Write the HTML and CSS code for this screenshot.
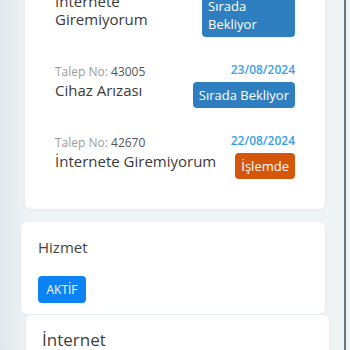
FILE: index.html
```html
<!DOCTYPE html>
<html>
<head>
    <meta charset="utf-8">
    <title>Taleplerim</title>
    <link rel="stylesheet" href="styles.css">
</head>
<body>
    <div class="screen">
        <div class="card ticket-list">
            <div class="ticket">
                <div class="ticket-info">
                    <div class="ticket-no">Talep No: <span>43012</span></div>
                    <div class="ticket-title">Internete<br>Giremiyorum</div>
                </div>
                <div class="ticket-side">
                    <div class="ticket-date">24/08/2024</div>
                    <span class="badge badge-wait badge-wide">Sırada Bekliyor</span>
                </div>
            </div>
            <div class="ticket">
                <div class="ticket-info">
                    <div class="ticket-no">Talep No: <span>43005</span></div>
                    <div class="ticket-title">Cihaz Arızası</div>
                </div>
                <div class="ticket-side">
                    <div class="ticket-date">23/08/2024</div>
                    <span class="badge badge-wait">Sırada Bekliyor</span>
                </div>
            </div>
            <div class="ticket">
                <div class="ticket-info">
                    <div class="ticket-no">Talep No: <span>42670</span></div>
                    <div class="ticket-title">İnternete Giremiyorum</div>
                </div>
                <div class="ticket-side">
                    <div class="ticket-date">22/08/2024</div>
                    <span class="badge badge-progress">İşlemde</span>
                </div>
            </div>
        </div>

        <div class="card service-card">
            <h2>Hizmet</h2>
            <button class="status-btn">AKTİF</button>
        </div>

        <div class="card product-card">
            <h3>İnternet</h3>
        </div>
    </div>
</body>
</html>
```

FILE: styles.css
```css
html, body {
    margin: 0;
    padding: 0;
    height: 350px;
    overflow: hidden;
    background-color: #eef3f6;
}
body {
    font-family: "Open Sans", "Noto Sans", Arial, sans-serif;
    color: #3d3d3d;
}
.screen {
    width: 344px;
    height: 350px;
    overflow: hidden;
    border-right: 2px solid #68747c;
    background: linear-gradient(to right, #dfe8ed, #eef3f6 28px);
}
.card {
    background-color: white;
    border-radius: 6px;
    box-shadow: 0 1px 4px rgba(0,0,0,0.04);
}
.ticket-list {
    margin: -52px 19px 0 25px;
    padding: 25px 30px 30px;
    display: flex;
    flex-direction: column;
    gap: 25px;
}
.ticket {
    display: flex;
    justify-content: space-between;
    align-items: flex-start;
}
.ticket-info {
    margin-top: 1px;
}
.ticket-no {
    font-size: 12px;
    line-height: 18px;
    color: #9c9c9c;
}
.ticket-no span {
    color: #555;
    font-weight: 500;
}
.ticket-title {
    font-size: 15px;
    line-height: 18px;
    font-weight: 500;
    color: #3a3a3a;
}
.ticket-side {
    display: flex;
    flex-direction: column;
    align-items: flex-end;
    gap: 4px;
}
.ticket-date {
    font-size: 12px;
    line-height: 16px;
    font-weight: 600;
    color: #3a9fe6;
}
.badge {
    display: inline-block;
    color: white;
    font-size: 13px;
    line-height: 18px;
    padding: 4px 6px;
    border-radius: 4px;
}
.badge-wide {
    width: 81px;
}
.badge-wait {
    background-color: #2f7fc0;
}
.badge-progress {
    background-color: #d4560a;
}
.service-card {
    margin: 13px 19px 0 21px;
    padding: 15px 17px 11px;
}
.service-card h2 {
    margin: 0 0 19px;
    font-size: 15px;
    line-height: 20px;
    font-weight: 400;
    color: #444;
}
.status-btn {
    font-family: inherit;
    font-size: 12px;
    color: white;
    background-color: #0c83f4;
    border: none;
    border-radius: 4px;
    height: 27px;
    width: 48px;
    padding: 0;
}
.product-card {
    margin: 1px 15px 0 26px;
    padding: 14px 16px 10px;
}
.product-card h3 {
    margin: 0;
    font-size: 17px;
    line-height: 22px;
    font-weight: 400;
    color: #3d3d3d;
}
```
